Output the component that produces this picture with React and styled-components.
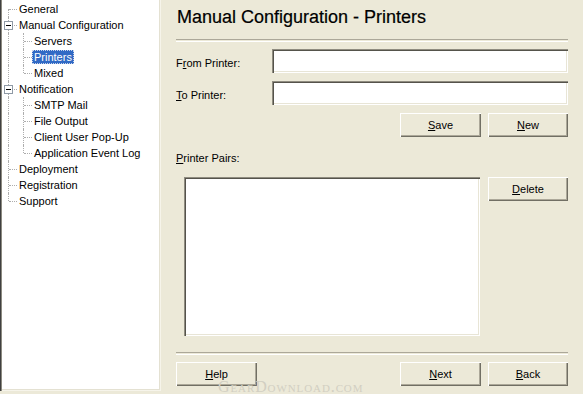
import React from "react"
import styled, { createGlobalStyle } from "styled-components"

const GlobalStyle = createGlobalStyle`
  html, body {
    margin: 0;
    padding: 0;
    background: #ece9d8;
  }
  body {
    font-family: "Liberation Sans", Arial, sans-serif;
    font-size: 11px;
    color: #000;
  }
`

const treeItems = [
  { label: "General", level: 0 },
  { label: "Manual Configuration", level: 0, open: true },
  { label: "Servers", level: 1, pass: true },
  { label: "Printers", level: 1, pass: true, selected: true },
  { label: "Mixed", level: 1, pass: true, last: true },
  { label: "Notification", level: 0, open: true },
  { label: "SMTP Mail", level: 1, pass: true },
  { label: "File Output", level: 1, pass: true },
  { label: "Client User Pop-Up", level: 1, pass: true },
  { label: "Application Event Log", level: 1, pass: true, last: true },
  { label: "Deployment", level: 0 },
  { label: "Registration", level: 0 },
  { label: "Support", level: 0, last: true },
]

const App = () => (
  <>
    <GlobalStyle />
    <Window>
      <TreePanel>
        {treeItems.map((item, i) => (
          <TreeRow key={item.label}>
            {item.level === 1 && <Guide kind={item.pass ? "pass" : "none"} />}
            <Guide kind={item.last ? "end" : i === 0 ? "first" : "tee"}>
              {item.open && <Expander />}
            </Guide>
            <TreeLabel selected={item.selected}>{item.label}</TreeLabel>
          </TreeRow>
        ))}
      </TreePanel>

      <Main>
        <Title>Manual Configuration - Printers</Title>
        <Etched top={9} />

        <FieldRow top={7}>
          <FieldLabel>F<u>r</u>om Printer:</FieldLabel>
          <TextBox />
        </FieldRow>
        <FieldRow top={8}>
          <FieldLabel><u>T</u>o Printer:</FieldLabel>
          <TextBox />
        </FieldRow>

        <ButtonRow top={8}>
          <Button><u>S</u>ave</Button>
          <Button narrow><u>N</u>ew</Button>
        </ButtonRow>

        <PairsLabel><u>P</u>rinter Pairs:</PairsLabel>
        <PairsRow>
          <ListBox />
          <Button narrow><u>D</u>elete</Button>
        </PairsRow>

        <Etched top={16} />

        <FooterRow>
          <Button><u>H</u>elp</Button>
          <Spacer />
          <Button><u>N</u>ext</Button>
          <Button narrow><u>B</u>ack</Button>
        </FooterRow>

        <Watermark>GearDownload.com</Watermark>
      </Main>
    </Window>
  </>
)

const Window = styled.div`
  display: flex;
  width: 583px;
  height: 394px;
  overflow: hidden;
`

const TreePanel = styled.div`
  width: 161px;
  height: 391px;
  box-sizing: border-box;
  padding: 1px 0 0 2px;
  background: #fff;
  box-shadow: inset 1px 0 #404040, inset 2px 0 #8c8a80, inset -1px -1px #f6f4ea,
    inset -2px -2px #e4e1d2;
`

const TreeRow = styled.div`
  display: flex;
  align-items: center;
  height: 16px;
`

const Guide = styled.div`
  position: relative;
  flex: none;
  width: 15px;
  height: 16px;

  &::before {
    content: "";
    position: absolute;
    left: 6px;
    width: 0;
    border-left: 1px dotted #adadad;
    display: ${(p) => (p.kind === "none" ? "none" : "block")};
    top: ${(p) => (p.kind === "first" ? "8px" : "0")};
    height: ${(p) =>
      p.kind === "end" ? "8px" : p.kind === "first" ? "8px" : "16px"};
  }

  &::after {
    content: "";
    position: absolute;
    left: 7px;
    top: 8px;
    width: 8px;
    border-top: 1px dotted #adadad;
    display: ${(p) => (p.kind === "pass" || p.kind === "none" ? "none" : "block")};
  }
`

const Expander = styled.span`
  position: absolute;
  z-index: 1;
  left: 2px;
  top: 4px;
  width: 7px;
  height: 7px;
  background: #fff;
  border: 1px solid #8f9aa6;

  &::after {
    content: "";
    position: absolute;
    left: 1px;
    top: 3px;
    width: 5px;
    height: 1px;
    background: #000;
  }
`

const TreeLabel = styled.span`
  padding: 0 2px;
  line-height: 14px;
  white-space: nowrap;
  color: ${(p) => (p.selected ? "#fff" : "#000")};
  background: ${(p) => (p.selected ? "#316ac5" : "transparent")};
  outline: ${(p) => (p.selected ? "1px dotted #c8d4ea" : "none")};
  outline-offset: -1px;
`

const Main = styled.div`
  position: relative;
  flex: 1;
  display: flex;
  flex-direction: column;
  padding: 4px 15px 0 15px;
`

const Title = styled.div`
  height: 26px;
  line-height: 26px;
  font-size: 18px;
  color: #000;
  padding-left: 1px;
  -webkit-text-stroke: 0.2px #000;
`

const Etched = styled.div`
  margin-top: ${(p) => p.top}px;
  height: 1px;
  flex: none;
  border-top: 1px solid #aca899;
  border-bottom: 1px solid #fff;
`

const FieldRow = styled.div`
  display: grid;
  grid-template-columns: 96px 1fr;
  align-items: center;
  margin-top: ${(p) => p.top}px;
  height: 24px;
`

const FieldLabel = styled.span`
  padding-top: 3px;
`

const TextBox = styled.div`
  height: 24px;
  background: #fff;
  box-shadow: inset 1px 1px #8f8c80, inset 2px 2px #55534b, inset -1px -1px #fff,
    inset -2px -2px #e8e5d6;
`

const ButtonRow = styled.div`
  display: flex;
  justify-content: flex-end;
  gap: 7px;
  margin-top: ${(p) => p.top}px;
`

const Button = styled.div`
  display: flex;
  align-items: center;
  justify-content: center;
  flex: none;
  width: ${(p) => (p.narrow ? 80 : 81)}px;
  height: 24px;
  font-size: 11px;
  padding-bottom: 1px;
  box-sizing: border-box;
  background: #ece9d8;
  box-shadow: inset 1px 1px #fff, inset -1px -1px #716f64, inset -2px -2px #aca899;

  u {
    text-underline-offset: 1px;
  }
`

const PairsLabel = styled.div`
  margin-top: 14px;
  height: 14px;
  line-height: 14px;
`

const PairsRow = styled.div`
  display: flex;
  gap: 8px;
  margin-top: 12px;
  padding-left: 8px;
  align-items: flex-start;
`

const ListBox = styled.div`
  flex: 1;
  height: 159px;
  background: #fff;
  box-shadow: inset 1px 1px #8f8c80, inset 2px 2px #55534b, inset -1px -1px #fff,
    inset -2px -2px #e8e5d6;
`

const FooterRow = styled.div`
  display: flex;
  gap: 7px;
  margin-top: 7px;
`

const Spacer = styled.div`
  flex: 1;
`

const Watermark = styled.div`
  position: absolute;
  left: 57px;
  top: 381px;
  line-height: 12px;
  font-family: "Liberation Serif", "Times New Roman", serif;
  font-variant: small-caps;
  font-size: 16px;
  letter-spacing: 0.9px;
  color: #d2cfc2;
  pointer-events: none;
`

export default App
